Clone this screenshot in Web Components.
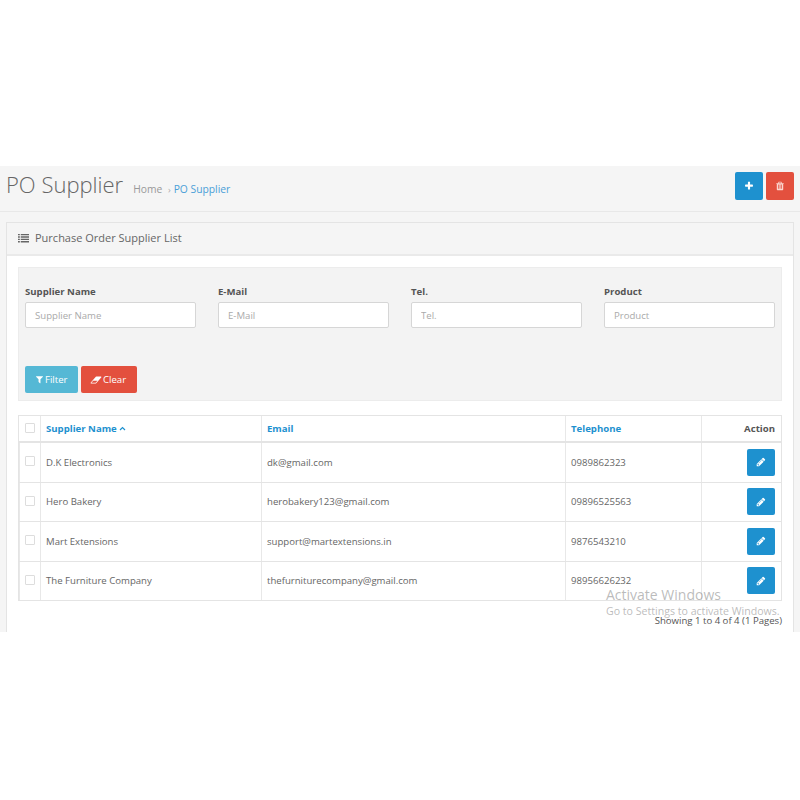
<!DOCTYPE html>
<html>
<head>
<meta charset="utf-8">
<title>PO Supplier</title>
<style>
  html, body { margin: 0; background: #fff; }
  body { padding-top: 166px; font-family: 'Open Sans', 'Liberation Sans', sans-serif; font-size: 9.600px; color: #666; }
</style>
</head>
<body>
<po-page>
  <po-header title="PO Supplier"></po-header>
  <po-panel heading="Purchase Order Supplier List">
    <po-filter>
      <po-field label="Supplier Name"></po-field>
      <po-field label="E-Mail"></po-field>
      <po-field label="Tel."></po-field>
      <po-field label="Product"></po-field>
    </po-filter>
    <po-table>
      <po-row name="D.K Electronics" email="dk@gmail.com" tel="0989862323"></po-row>
      <po-row name="Hero Bakery" email="herobakery123@gmail.com" tel="09896525563"></po-row>
      <po-row name="Mart Extensions" email="support@martextensions.in" tel="9876543210"></po-row>
      <po-row name="The Furniture Company" email="thefurniturecompany@gmail.com" tel="98956626232"></po-row>
    </po-table>
    <po-pager>Showing 1 to 4 of 4 (1 Pages)</po-pager>
  </po-panel>
  <po-watermark></po-watermark>
</po-page>

<script>
'use strict';
const ICONS = {
  plus: '<svg viewBox="0 0 1792 1792"><path fill="currentColor" d="M1600 736v192q0 40-28 68t-68 28h-416v416q0 40-28 68t-68 28h-192q-40 0-68-28t-28-68v-416h-416q-40 0-68-28t-28-68v-192q0-40 28-68t68-28h416v-416q0-40 28-68t68-28h192q40 0 68 28t28 68v416h416q40 0 68 28t28 68z"/></svg>',
  trash: '<svg viewBox="0 0 1792 1792"><path fill="currentColor" d="M704 1376v-704q0-14-9-23t-23-9h-64q-14 0-23 9t-9 23v704q0 14 9 23t23 9h64q14 0 23-9t9-23zm256 0v-704q0-14-9-23t-23-9h-64q-14 0-23 9t-9 23v704q0 14 9 23t23 9h64q14 0 23-9t9-23zm256 0v-704q0-14-9-23t-23-9h-64q-14 0-23 9t-9 23v704q0 14 9 23t23 9h64q14 0 23-9t9-23zm-544-992h448l-48-117q-7-9-17-11h-317q-10 2-17 11zm928 32v64q0 14-9 23t-23 9h-96v948q0 83-47 143.500t-113 60.500h-832q-66 0-113-58.500t-47-141.500v-952h-96q-14 0-23-9t-9-23v-64q0-14 9-23t23-9h309l70-167q15-37 54-63t79-26h320q40 0 79 26t54 63l70 167h309q14 0 23 9t9 23z"/></svg>',
  pencil: '<svg viewBox="0 0 1792 1792"><path fill="currentColor" d="M491 1536l91-91-235-235-91 91v107h128v128h107zm523-928q0-22-22-22-10 0-17 7l-542 542q-7 7-7 17 0 22 22 22 10 0 17-7l542-542q7-7 7-17zm-54-192l416 416-832 832h-416v-416zm683 96q0 53-37 90l-166 166-416-416 166-165q36-38 90-38 53 0 91 38l235 234q37 39 37 91z"/></svg>',
  filter: '<svg viewBox="0 0 1792 1792"><path fill="currentColor" d="M1595 295q17 41-14 70l-493 493v742q0 42-39 59-13 5-25 5-27 0-45-19l-256-256q-19-19-19-45v-486l-493-493q-31-29-14-70 17-39 59-39h1280q42 0 59 39z"/></svg>',
  eraser: '<svg viewBox="0 0 2048 1792"><path fill="currentColor" d="M960 1408l336-384h-768l-336 384h768zm1013-1077q15 34 9.500 71.500t-30.500 65.500l-896 1024q-38 44-96 44h-768q-38 0-69.500-20.500t-47.500-54.500q-15-34-9.500-71.500t30.500-65.500l896-1024q38-44 96-44h768q38 0 70 20.500t47 54.500z"/></svg>',
  list: '<svg viewBox="0 0 12 10"><path fill="currentColor" d="M0 .5h2v1.600H0zM3 .5h9v1.600H3zM0 3.100h2v1.600H0zM3 3.100h9v1.600H3zM0 5.700h2v1.600H0zM3 5.700h9v1.600H3zM0 8.300h2v1.600H0zM3 8.300h9v1.600H3z"/></svg>'
};

class PoElement extends HTMLElement {
  constructor() {
    super();
    this.shadowDOM = this.attachShadow({ mode: 'open' });
  }
  connectedCallback() {
    this.render();
  }
}

class PoPage extends PoElement {
  render() {
    this.shadowDOM.innerHTML = `
      <style>
        :host { display: block; position: relative; height: 466px; overflow: hidden; background: #f5f5f5; }
      </style>
      <slot></slot>
    `;
  }
}

class PoHeader extends PoElement {
  render() {
    this.shadowDOM.innerHTML = `
      <style>
        :host { display: flex; align-items: flex-start; box-sizing: border-box; height: 46px; padding: 0 6px; border-bottom: 1px solid #e8e8e8; }
        h1 { margin: 0; font-size: 22px; line-height: 37px; font-weight: 300; color: #666; white-space: nowrap; }
        nav { margin: 16px 0 0 10px; line-height: 14px; font-size: 10.300px; color: #999; white-space: nowrap; }
        nav i { font-style: normal; margin: 0 3px 0 3px; font-size: 9px; color: #aaa; }
        nav b { font-weight: 400; color: #4a9fd8; }
        .actions { margin: 6px 0 0 auto; display: flex; gap: 3px; }
        a { display: flex; align-items: center; justify-content: center; width: 28px; height: 28px; border-radius: 2px; color: #fff; }
        a.add { background: #1e91cf; }
        a.del { background: #e3503e; color: #fbd6cf; }
        svg { width: 10px; height: 10px; display: block; }
      </style>
      <h1>${this.getAttribute('title')}</h1>
      <nav>Home <i>›</i><b>PO Supplier</b></nav>
      <div class="actions">
        <a class="add">${ICONS.plus}</a>
        <a class="del">${ICONS.trash}</a>
      </div>
    `;
  }
}

class PoPanel extends PoElement {
  render() {
    this.shadowDOM.innerHTML = `
      <style>
        :host { display: block; margin: 10px 6px 0; border: 1px solid #e4e4e4; border-bottom: 0; background: #fff; height: 500px; }
        header { display: flex; align-items: center; gap: 6px; height: 31px; padding: 0 11px 2px; box-sizing: border-box; height: 33px; background: #f5f5f5; border-bottom: 2px solid #eaeaea; font-size: 11px; color: #666; }
        svg { width: 11px; height: 10px; display: block; }
        .body { padding: 11px 11px 0; }
      </style>
      <header>${ICONS.list}<span>${this.getAttribute('heading')}</span></header>
      <div class="body"><slot></slot></div>
    `;
  }
}

class PoFilter extends PoElement {
  render() {
    this.shadowDOM.innerHTML = `
      <style>
        :host { display: block; box-sizing: border-box; height: 134px; padding: 16px 6px 0; background: #f3f3f3; border: 1px solid #ececec; }
        .fields { display: grid; grid-template-columns: repeat(4, 171px); column-gap: 22px; }
        .buttons { display: flex; gap: 3px; margin-top: 38px; }
        a { display: flex; align-items: center; gap: 1px; box-sizing: border-box; height: 27px; border-radius: 2px; color: #fff; font-size: 9.600px; }
        a.filter { width: 53px; padding-left: 10px; background: #55b8d5; }
        a.clear { width: 56px; padding-left: 9px; background: #e3503e; }
        svg { height: 9px; width: 9px; display: block; }
        a.clear svg { width: 12px; height: 10px; }
      </style>
      <div class="fields"><slot></slot></div>
      <div class="buttons">
        <a class="filter">${ICONS.filter}<span>Filter</span></a>
        <a class="clear">${ICONS.eraser}<span>Clear</span></a>
      </div>
    `;
  }
}

class PoField extends PoElement {
  render() {
    const label = this.getAttribute('label');
    this.shadowDOM.innerHTML = `
      <style>
        :host { display: block; }
        label { display: block; height: 18px; line-height: 16px; font-size: 9.600px; font-weight: 700; color: #555; }
        input { display: block; box-sizing: border-box; width: 171px; height: 26px; padding: 0 9px; margin: 0; background: #fff; border: 1px solid #d6d6d6; border-radius: 2px; font: 400 9.600px 'Open Sans', 'Liberation Sans', sans-serif; color: #666; outline: 0; }
        input::placeholder { color: #aaa; opacity: 1; }
      </style>
      <label>${label}</label>
      <input type="text" placeholder="${label}">
    `;
  }
}

const ROW_COLS = '21px 221px 304px 136px 1fr';

class PoTable extends PoElement {
  render() {
    this.shadowDOM.innerHTML = `
      <style>
        :host { display: block; margin-top: 14px; border: 1px solid #e4e4e4; border-bottom: 0; background: #fff; }
        .head { display: grid; grid-template-columns: ${ROW_COLS}; height: 25px; border-bottom: 2px solid #e4e4e4; font-size: 9.600px; font-weight: 700; }
        .head > div { display: flex; align-items: center; padding: 0 5px; border-left: 1px solid #e8e8e8; color: #1e91cf; }
        .head > div:first-child { border-left: 0; justify-content: center; padding: 0; }
        .head > div:last-child { justify-content: flex-end; padding-right: 6px; color: #555; }
        .check { box-sizing: border-box; display: block; width: 10px; height: 10px; border: 1px solid #ddd; border-radius: 1px; background: #fff; margin-top: -1px; }
        svg { width: 7px; height: 5px; margin-left: 2px; display: block; }
      </style>
      <div class="head">
        <div><span class="check"></span></div>
        <div>Supplier Name<svg viewBox="0 0 7 5"><path d="M1 4l2.500-2.500L6 4" fill="none" stroke="currentColor" stroke-width="1.200"/></svg></div>
        <div>Email</div>
        <div>Telephone</div>
        <div>Action</div>
      </div>
      <slot></slot>
    `;
  }
}

class PoRow extends PoElement {
  render() {
    this.shadowDOM.innerHTML = `
      <style>
        :host { display: grid; grid-template-columns: ${ROW_COLS}; box-sizing: border-box; height: 39.500px; border-bottom: 1px solid #e4e4e4; font-size: 9.600px; color: #666; }
        div { display: flex; align-items: center; padding: 0 5px; border-left: 1px solid #e8e8e8; white-space: nowrap; }
        div:first-child { border-left: 0; justify-content: center; padding: 0; }
        div:last-child { justify-content: flex-end; padding-right: 6px; }
        .check { box-sizing: border-box; display: block; width: 10px; height: 10px; border: 1px solid #ddd; border-radius: 1px; background: #fff; margin-top: -2px; }
        a { display: flex; align-items: center; justify-content: center; width: 28px; height: 27px; border-radius: 2px; background: #1e91cf; color: #fff; }
        svg { width: 10px; height: 10px; display: block; }
      </style>
      <div><span class="check"></span></div>
      <div>${this.getAttribute('name')}</div>
      <div>${this.getAttribute('email')}</div>
      <div>${this.getAttribute('tel')}</div>
      <div><a>${ICONS.pencil}</a></div>
    `;
  }
}

class PoPager extends PoElement {
  render() {
    this.shadowDOM.innerHTML = `
      <style>
        :host { display: block; margin-top: 14px; text-align: right; font-size: 9.600px; line-height: 12px; color: #555; }
      </style>
      <slot></slot>
    `;
  }
}

class PoWatermark extends PoElement {
  render() {
    this.shadowDOM.innerHTML = `
      <style>
        :host { position: absolute; left: 606px; top: 420px; color: rgba(120, 120, 120, .5); white-space: nowrap; pointer-events: none; }
        p { margin: 0; }
        .big { font-size: 14px; line-height: 18px; }
        .small { font-size: 10.600px; line-height: 14px; }
      </style>
      <p class="big">Activate Windows</p>
      <p class="small">Go to Settings to activate Windows.</p>
    `;
  }
}

customElements.define('po-page', PoPage);
customElements.define('po-header', PoHeader);
customElements.define('po-panel', PoPanel);
customElements.define('po-filter', PoFilter);
customElements.define('po-field', PoField);
customElements.define('po-table', PoTable);
customElements.define('po-row', PoRow);
customElements.define('po-pager', PoPager);
customElements.define('po-watermark', PoWatermark);
</script>
</body>
</html>
